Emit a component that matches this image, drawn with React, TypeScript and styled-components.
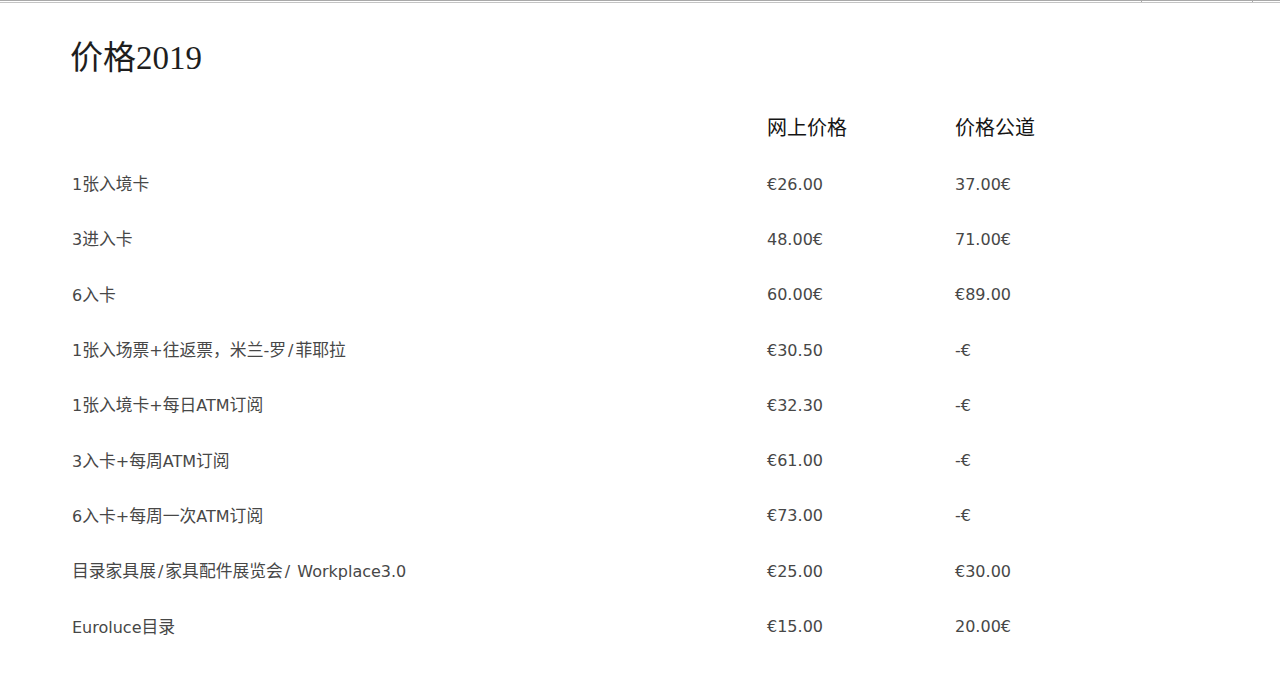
import React from 'react';
import styled, { createGlobalStyle } from 'styled-components';

const GlobalStyle = createGlobalStyle`
  body {
    margin: 0;
    background: #fff;
    font-family: 'DejaVu Sans', 'Noto Sans CJK SC', sans-serif;
  }
`;

const TopStrip = styled.div`
  display: flex;
  height: 3px;
  border-top: 1px solid #a9a9a9;
  border-bottom: 1px solid #c4c4c4;
  box-sizing: border-box;
`;

const StripCell = styled.div<{ $width?: number }>`
  flex: ${(p) => (p.$width ? `0 0 ${p.$width}px` : '1')};
  border-left: ${(p) => (p.$width ? '1px solid #a9a9a9' : 'none')};
`;

const Page = styled.main`
  padding: 0 70px;
`;

const Title = styled.h1`
  margin: 35px 0 21px;
  font-family: 'Liberation Serif', 'Noto Sans CJK SC', serif;
  font-weight: 400;
  font-size: 33px;
  line-height: 40px;
  color: #1e1e1e;
`;

const PriceTable = styled.div`
  display: grid;
  grid-template-columns: 697px 188px 1fr;
`;

const Row = styled.div<{ $head?: boolean }>`
  display: contents;

  & > div {
    height: ${(p) => (p.$head ? '58px' : '55.3px')};
    display: flex;
    align-items: center;
    font-size: ${(p) => (p.$head ? '20px' : '16px')};
    line-height: 22px;
    color: ${(p) => (p.$head ? '#151515' : '#474747')};
    white-space: nowrap;
  }
`;

const Cell = styled.div<{ $inset?: number }>`
  padding-left: ${(p) => p.$inset ?? 0}px;
`;

const CjkWide = styled.span`
  font-size: 16.8px;
`;

const Slash = styled.span`
  padding: 0 2px;
`;

const rows = [
  ['1张入境卡', '€26.00', '37.00€'],
  ['3进入卡', '48.00€', '71.00€'],
  ['6入卡', '60.00€', '€89.00'],
  ['1张入场票+往返票，米兰-罗/菲耶拉', '€30.50', '-€'],
  ['1张入境卡+每日ATM订阅', '€32.30', '-€'],
  ['3入卡+每周ATM订阅', '€61.00', '-€'],
  ['6入卡+每周一次ATM订阅', '€73.00', '-€'],
  ['目录家具展/家具配件展览会/ Workplace3.0', '€25.00', '€30.00'],
  ['Euroluce目录', '€15.00', '20.00€'],
];

// CJK runs sit a touch larger in the picture, and the slashes are spaced out
const splitLabel = (text: string) =>
  text.split(/([\u3000-\u9fff\uff00-\uffef]+|\/)/).map((part, i) => {
    if (part === '/') return <Slash key={i}>/</Slash>;
    if (/[\u3000-\u9fff\uff00-\uffef]/.test(part)) return <CjkWide key={i}>{part}</CjkWide>;
    return part;
  });

const App = () => {
  return (
    <>
      <GlobalStyle />
      <TopStrip>
        <StripCell />
        <StripCell $width={110} />
        <StripCell $width={27} />
      </TopStrip>
      <Page>
        <Title>价格2019</Title>
        <PriceTable>
          <Row $head>
            <Cell />
            <Cell>网上价格</Cell>
            <Cell>价格公道</Cell>
          </Row>
          {rows.map((r) => (
            <Row key={r[0]}>
              <Cell $inset={2}>
                <span>{splitLabel(r[0])}</span>
              </Cell>
              <Cell>{r[1]}</Cell>
              <Cell>{r[2]}</Cell>
            </Row>
          ))}
        </PriceTable>
      </Page>
    </>
  );
};

export default App;
